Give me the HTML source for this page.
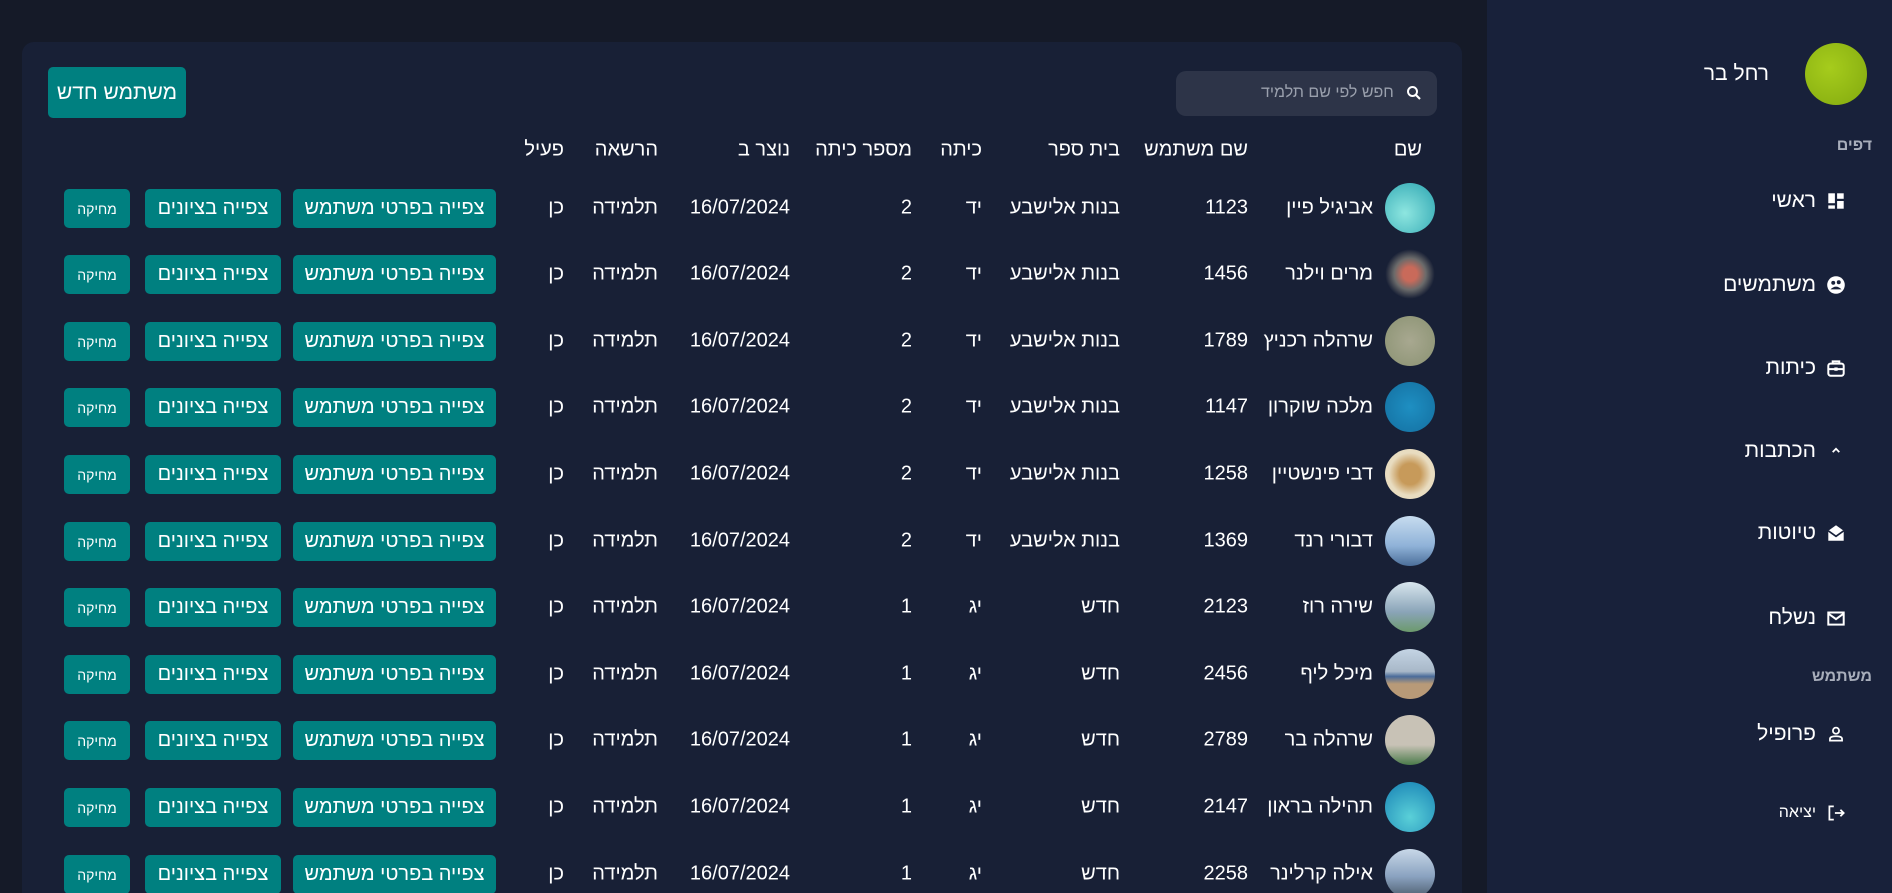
<!DOCTYPE html>
<html dir="rtl"><head><meta charset="utf-8"><style>
*{box-sizing:border-box;margin:0;padding:0}
html,body{width:1892px;height:893px;overflow:hidden}
body{background:#151a28;font-family:"Liberation Sans","DejaVu Sans",sans-serif;color:#fff;position:relative}
.card{position:absolute;left:22px;top:42px;width:1440px;height:851px;background:#182036;border-radius:12px 12px 0 0}
.side{position:absolute;left:1487px;top:0;width:405px;height:893px;background:#18213a}
.a{position:absolute;white-space:nowrap}
.t{font-size:20px;transform:translateY(-50%)}
.btn{position:absolute;background:#008080;border-radius:5px;color:#fff;display:flex;align-items:center;justify-content:center;font-size:20px}
.av{position:absolute;width:50px;height:50px;border-radius:50%}
.mi{position:absolute;right:76px;font-size:21px;transform:translateY(-50%)}
.ic{position:absolute;left:1825px;width:22px;height:22px;transform:translateY(-50%)}
</style></head><body>
<div class="card"></div>
<div class="side"></div>

<div class="btn" style="left:48px;top:67px;width:138px;height:51px;font-size:21px">משתמש חדש</div>
<div class="a" style="left:1176px;top:71px;width:261px;height:45px;background:#2d3448;border-radius:10px"></div>
<div class="a" style="left:1261px;top:84px;font-size:16px;color:#9aa0ad">חפש לפי שם תלמיד</div>
<svg class="a" style="left:1405px;top:84px" width="18" height="18" viewBox="0 0 24 24"><circle cx="10" cy="10" r="6" fill="none" stroke="#fff" stroke-width="2.6"/><path d="M14.5 14.5L20 20" stroke="#fff" stroke-width="2.8"/></svg>

<div id="hdr"></div>
<div id="rows"></div>

<div class="av" style="left:1805px;top:43px;width:62px;height:62px;background:radial-gradient(circle at 40% 40%,#a6cc1c,#82a90f)"></div>
<div class="a t" style="right:123px;top:74px;font-size:21px">רחל בר</div>
<div class="a t" style="right:20px;top:146px;font-size:16px;font-weight:bold;color:#a8aebb">דפים</div>
<div class="mi" style="top:201px">ראשי</div>
<svg class="ic" style="top:201px" viewBox="0 0 20 20"><rect x="3" y="3" width="6" height="9" fill="#fff"/><rect x="11" y="3" width="6" height="5" fill="#fff"/><rect x="11" y="10" width="6" height="7" fill="#fff"/><rect x="3" y="14" width="6" height="3" fill="#fff"/></svg>
<div class="mi" style="top:285px">משתמשים</div>
<svg class="ic" style="top:285px" viewBox="0 0 20 20"><circle cx="10" cy="10" r="8" fill="#fff"/><circle cx="7.5" cy="8" r="1.8" fill="#18213a"/><circle cx="12.5" cy="7.5" r="1.8" fill="#18213a"/><path d="M5 14q5-5 10 0" fill="#18213a"/></svg>
<div class="mi" style="top:368px">כיתות</div>
<svg class="ic" style="top:368px" viewBox="0 0 20 20"><rect x="3" y="6" width="14" height="11" rx="2" fill="none" stroke="#fff" stroke-width="1.8"/><path d="M7 6V4h6v2M3 11h14" stroke="#fff" stroke-width="1.8" fill="none"/><rect x="8.5" y="9.5" width="3" height="3" fill="#fff"/></svg>
<div class="mi" style="top:451px">הכתבות</div>
<svg class="ic" style="top:451px" viewBox="0 0 20 20"><path d="M7 11l3-3 3 3" stroke="#fff" stroke-width="1.6" fill="none"/></svg>
<div class="mi" style="top:533px">טיוטות</div>
<svg class="ic" style="top:533px" viewBox="0 0 20 20"><path d="M3 8l7-5 7 5v9H3z" fill="#fff"/><path d="M3 8l7 5 7-5" stroke="#18213a" stroke-width="1.5" fill="none"/></svg>
<div class="mi" style="top:618px">נשלח</div>
<svg class="ic" style="top:618px" viewBox="0 0 20 20"><rect x="3" y="5" width="14" height="11" fill="none" stroke="#fff" stroke-width="1.8"/><path d="M3 6l7 5 7-5" stroke="#fff" stroke-width="1.8" fill="none"/></svg>
<div class="a t" style="right:20px;top:677px;font-size:16px;font-weight:bold;color:#a8aebb">משתמש</div>
<div class="mi" style="top:734px">פרופיל</div>
<svg class="ic" style="top:734px" viewBox="0 0 20 20"><circle cx="10" cy="7" r="2.8" fill="none" stroke="#fff" stroke-width="1.6"/><path d="M4.5 16v-1.5q0-2.5 5.5-2.5t5.5 2.5V16z" fill="none" stroke="#fff" stroke-width="1.6"/></svg>
<div class="mi" style="top:813px;font-size:16px">יציאה</div>
<svg class="ic" style="top:813px" viewBox="0 0 20 20"><path d="M8 4H4v12h4M9 10h8M14 7l3 3-3 3" stroke="#fff" stroke-width="1.6" fill="none"/></svg>

<script>
var H=[["שם",1422],["שם משתמש",1248],["בית ספר",1120],["כיתה",982],["מספר כיתה",912],["נוצר ב",790],["הרשאה",658],["פעיל",564]];
var h="";H.forEach(function(x){h+='<div class="a t" style="right:'+(1892-x[1])+'px;top:150px">'+x[0]+'</div>'});
document.getElementById("hdr").innerHTML=h;
var R=[["אביגיל פיין","1123","בנות אלישבע","יד","2","radial-gradient(circle at 40% 60%,#8ee6e0,#2aa3b0)"],
["מרים וילנר","1456","בנות אלישבע","יד","2","radial-gradient(circle,#c96a5a 20%,#6a6a6a 45%,#182036 70%)"],
["שרהלה רכניץ","1789","בנות אלישבע","יד","2","radial-gradient(circle,#a8a890,#8a9272)"],
["מלכה שוקרון","1147","בנות אלישבע","יד","2","radial-gradient(circle,#1e8fc2,#146fa0)"],
["דבי פינשטיין","1258","בנות אלישבע","יד","2","radial-gradient(circle,#c79a5a 30%,#e8dcc0 60%)"],
["דבורי רנד","1369","בנות אלישבע","יד","2","linear-gradient(#c7dcef,#8fb2d8 60%,#4b6e99)"],
["שירה רוז","2123","חדש","יג","1","linear-gradient(#d8e6ee,#8aa4b8 60%,#6c9a6c)"],
["מיכל ליף","2456","חדש","יג","1","linear-gradient(#c4d4e4,#a8b8c8 45%,#4a6c9a 55%,#b89a78 70%)"],
["שרהלה בר","2789","חדש","יג","1","linear-gradient(#c8c2b6 60%,#4a7a4a)"],
["תהילה בראון","2147","חדש","יג","1","radial-gradient(circle at 50% 70%,#5ad0d8,#1680b4)"],
["אילה קרלינר","2258","חדש","יג","1","linear-gradient(#c8d8e8,#8aa2c0 55%,#4a5a6a)"]];
var s="";
R.forEach(function(r,i){var y=Math.round(207.5+66.6*i);
s+='<div class="av" style="left:1385px;top:'+(y-25)+'px;background:'+r[5]+'"></div>';
s+='<div class="a t" style="right:'+(1892-1373)+'px;top:'+y+'px">'+r[0]+'</div>';
s+='<div class="a t" style="right:'+(1892-1248)+'px;top:'+y+'px">'+r[1]+'</div>';
s+='<div class="a t" style="right:'+(1892-1120)+'px;top:'+y+'px">'+r[2]+'</div>';
s+='<div class="a t" style="right:'+(1892-982)+'px;top:'+y+'px">'+r[3]+'</div>';
s+='<div class="a t" style="right:'+(1892-912)+'px;top:'+y+'px">'+r[4]+'</div>';
s+='<div class="a t" style="right:'+(1892-790)+'px;top:'+y+'px" dir="ltr">16/07/2024</div>';
s+='<div class="a t" style="right:'+(1892-658)+'px;top:'+y+'px">תלמידה</div>';
s+='<div class="a t" style="right:'+(1892-564)+'px;top:'+y+'px">כן</div>';
s+='<div class="btn" style="left:293px;top:'+(y-19)+'px;width:203px;height:39px">צפייה בפרטי משתמש</div>';
s+='<div class="btn" style="left:145px;top:'+(y-19)+'px;width:136px;height:39px">צפייה בציונים</div>';
s+='<div class="btn" style="left:64px;top:'+(y-19)+'px;width:66px;height:39px;font-size:14px">מחיקה</div>';});
document.getElementById("rows").innerHTML=s;
</script>
</body></html>
